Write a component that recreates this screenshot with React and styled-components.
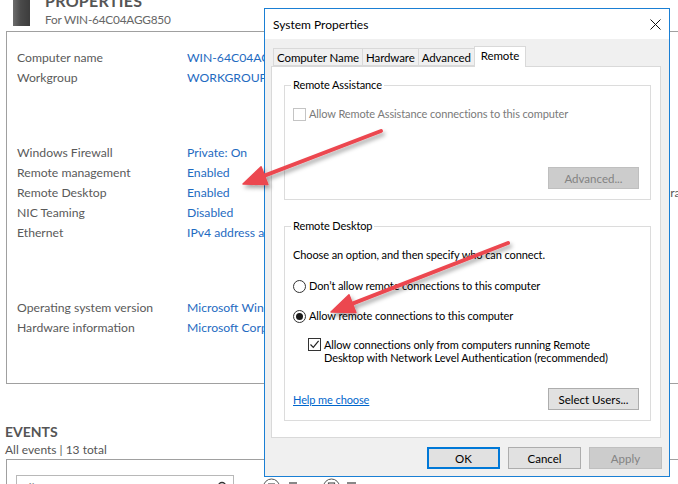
import React from 'react';
import styled, { createGlobalStyle } from 'styled-components';

const GlobalStyle = createGlobalStyle`
  html, body {
    margin: 0;
    padding: 0;
    background: #ffffff;
    overflow: hidden;
  }
  body {
    font-family: Lato, "Liberation Sans", sans-serif;
  }
`;

const groups = [
  [
    ['Computer name', 'WIN-64C04AGG850'],
    ['Workgroup', 'WORKGROUP'],
  ],
  [
    ['Windows Firewall', 'Private: On', 'Windows Defender'],
    ['Remote management', 'Enabled', 'Feedback & Diagnostics'],
    ['Remote Desktop', 'Enabled', 'IE Enhanced Security Configuration'],
    ['NIC Teaming', 'Disabled', 'Time zone'],
    ['Ethernet', 'IPv4 address assigned by DHCP, IPv6 enabled', 'Product ID'],
  ],
  [
    ['Operating system version', 'Microsoft Windows Server 2016 Datacenter'],
    ['Hardware information', 'Microsoft Corporation Virtual Machine'],
  ],
];

const tabs = ['Computer Name', 'Hardware', 'Advanced', 'Remote'];

// arrow: tail -> tip, head drawn at the tip
const arrowPath = (tx, ty, px, py) => {
  const dx = px - tx;
  const dy = py - ty;
  const len = Math.hypot(dx, dy);
  const ux = dx / len;
  const uy = dy / len;
  const bx = px - ux * 23;
  const by = py - uy * 23;
  const nx = -uy * 9.5;
  const ny = ux * 9.5;
  return {
    line: { x1: tx, y1: ty, x2: bx + ux * 2, y2: by + uy * 2 },
    head: `${px},${py} ${bx + nx},${by + ny} ${bx - nx},${by - ny}`,
  };
};

const arrows = [arrowPath(381, 131, 243, 184), arrowPath(508, 243, 331, 312)];

const App = () => {
  return (
    <Page>
      <GlobalStyle />
      <Header>
        <ServerIcon />
        <Titles>
          <Title>PROPERTIES</Title>
          <Subtitle>For WIN-64C04AGG850</Subtitle>
        </Titles>
      </Header>

      <PropsPanel>
        {groups.map((rows, gi) => (
          <PropGroup key={gi}>
            {rows.map(([label, value, extra]) => (
              <PropRow key={label}>
                <PropLabel>{label}</PropLabel>
                <PropValue>{value}</PropValue>
                {extra && <PropLabel>{extra}</PropLabel>}
              </PropRow>
            ))}
          </PropGroup>
        ))}
      </PropsPanel>

      <EventsTitle>EVENTS</EventsTitle>
      <EventsSub>All events | 13 total</EventsSub>
      <EventsPanel>
        <Filter>
          <span>Filter</span>
          <svg width="12" height="12" viewBox="0 0 12 12">
            <circle cx="7" cy="5" r="3.5" fill="none" stroke="#333" strokeWidth="1.4" />
            <line x1="4.5" y1="7.5" x2="1" y2="11" stroke="#333" strokeWidth="1.6" />
          </svg>
        </Filter>
        <ToolIcons>
          <ToolIcon>
            <svg width="38" height="18" viewBox="0 0 38 18">
              <circle cx="8.5" cy="9" r="8" fill="none" stroke="#555" strokeWidth="1" />
              <line x1="5" y1="6" x2="12" y2="6" stroke="#555" strokeWidth="1.2" />
              <line x1="5" y1="9" x2="12" y2="9" stroke="#555" strokeWidth="1.2" />
              <line x1="26" y1="5" x2="34" y2="5" stroke="#555" strokeWidth="1.4" />
            </svg>
          </ToolIcon>
          <ToolIcon>
            <svg width="38" height="18" viewBox="0 0 38 18">
              <circle cx="8.5" cy="9" r="8" fill="none" stroke="#555" strokeWidth="1" />
              <rect x="5.5" y="5" width="6" height="7" fill="none" stroke="#555" strokeWidth="1.2" />
              <line x1="24" y1="5" x2="33" y2="5" stroke="#555" strokeWidth="1.4" />
            </svg>
          </ToolIcon>
        </ToolIcons>
      </EventsPanel>

      <Dialog>
        <TitleBar>
          <span>System Properties</span>
          <svg width="11" height="11" viewBox="0 0 11 11">
            <path d="M0.5 0.5 L10.5 10.5 M10.5 0.5 L0.5 10.5" stroke="#111" strokeWidth="1" />
          </svg>
        </TitleBar>
        <DialogBody>
          <Tabs>
            {tabs.map((t) => (
              <Tab key={t} $active={t === 'Remote'}>
                {t}
              </Tab>
            ))}
          </Tabs>
          <TabPanel>
            <Group>
              <Legend>Remote Assistance</Legend>
              <OptionRow $disabled $top={15}>
                <CheckBox $disabled />
                <span>Allow Remote Assistance connections to this computer</span>
              </OptionRow>
              <ButtonRow $top={46}>
                <Button disabled>Advanced...</Button>
              </ButtonRow>
            </Group>

            <Group $top={19}>
              <Legend>Remote Desktop</Legend>
              <Text $top={14}>Choose an option, and then specify who can connect.</Text>
              <OptionRow $top={16}>
                <Radio />
                <span>Don’t allow remote connections to this computer</span>
              </OptionRow>
              <OptionRow $top={16}>
                <Radio $checked />
                <span>Allow remote connections to this computer</span>
              </OptionRow>
              <OptionRow $top={15} $indent={15} $multi>
                <CheckBox>
                  <svg width="11" height="11" viewBox="0 0 11 11">
                    <path d="M1.5 5.5 L4.3 8.4 L9.6 1.8" fill="none" stroke="#222" strokeWidth="1.2" />
                  </svg>
                </CheckBox>
                <span>
                  Allow connections only from computers running Remote
                  <br />
                  Desktop with Network Level Authentication (recommended)
                </span>
              </OptionRow>
              <ButtonRow $top={24} $between>
                <HelpLink href="#">Help me choose</HelpLink>
                <Button>Select Users...</Button>
              </ButtonRow>
            </Group>
          </TabPanel>
          <Footer>
            <Button $wide $primary>OK</Button>
            <Button $wide>Cancel</Button>
            <Button $wide disabled>Apply</Button>
          </Footer>
        </DialogBody>
      </Dialog>

      <ArrowLayer width="678" height="484" viewBox="0 0 678 484">
        <defs>
          <filter id="shadow" x="-20%" y="-20%" width="140%" height="160%">
            <feDropShadow dx="2" dy="3" stdDeviation="2" floodColor="#000" floodOpacity="0.35" />
          </filter>
        </defs>
        {arrows.map((a, i) => (
          <g key={i} filter="url(#shadow)">
            <line {...a.line} stroke="#ec4750" strokeWidth="4" strokeLinecap="round" />
            <polygon points={a.head} fill="#ec4750" stroke="#ec4750" strokeWidth="1.5" strokeLinejoin="round" />
          </g>
        ))}
      </ArrowLayer>
    </Page>
  );
};

export default App;

const Page = styled.div`
  position: relative;
  width: 678px;
  height: 484px;
  overflow: hidden;
  background: #ffffff;
`;

const Header = styled.header`
  display: flex;
  align-items: flex-start;
  margin-top: -8px;
  padding-left: 13px;
  height: 39px;
`;

const ServerIcon = styled.div`
  width: 17px;
  height: 34px;
  background: linear-gradient(90deg, #6d6d6d 0%, #4a4a4a 45%, #3c3c3c 100%);
`;

const Titles = styled.div`
  margin-left: 15px;
  display: flex;
  flex-direction: column;
`;

const Title = styled.div`
  font-size: 16px;
  font-weight: 700;
  line-height: 18px;
  color: #555555;
  letter-spacing: 0.3px;
`;

const Subtitle = styled.div`
  font-size: 11.8px;
  letter-spacing: -0.2px;
  line-height: 18px;
  color: #666666;
  margin-top: 1px;
`;

const PropsPanel = styled.section`
  box-sizing: border-box;
  margin-left: 6px;
  width: 720px;
  height: 353px;
  border: 1px solid #a0a0a0;
  padding: 15px 0 0 10px;
`;

const PropGroup = styled.div`
  & + & {
    margin-top: 55px;
  }
`;

const PropRow = styled.div`
  display: grid;
  grid-template-columns: 170px 326px auto;
  height: 20px;
  align-items: center;
  font-size: 12.2px;
  white-space: nowrap;
`;

const PropLabel = styled.span`
  color: #5a5a5a;
`;

const PropValue = styled.span`
  color: #1f6bc1;
  overflow: hidden;
`;

const EventsTitle = styled.div`
  margin: 39px 0 0 5px;
  font-size: 14px;
  font-weight: 700;
  line-height: 18px;
  color: #555555;
`;

const EventsSub = styled.div`
  margin-left: 5px;
  font-size: 12px;
  line-height: 17px;
  color: #555555;
`;

const EventsPanel = styled.section`
  box-sizing: border-box;
  margin: 1px 0 0 6px;
  width: 720px;
  height: 60px;
  border: 1px solid #a0a0a0;
  padding: 15px 0 0 9px;
  display: flex;
  align-items: flex-start;
`;

const Filter = styled.div`
  box-sizing: border-box;
  width: 218px;
  height: 24px;
  border: 1px solid #b8b8b8;
  display: flex;
  justify-content: space-between;
  align-items: center;
  padding: 0 6px 0 5px;
  font-size: 12px;
  color: #888888;
`;

const ToolIcons = styled.div`
  display: flex;
  gap: 22px;
  margin: 3px 0 0 29px;
`;

const ToolIcon = styled.div`
  display: flex;
`;

const Dialog = styled.div`
  position: absolute;
  left: 264px;
  top: 8px;
  box-sizing: border-box;
  width: 406px;
  height: 469px;
  border: 1px solid #1a7fd4;
  background: #f0f0f0;
  display: flex;
  flex-direction: column;
  font-family: Lato, "Liberation Sans", sans-serif;
  font-size: 11px;
  letter-spacing: -0.1px;
  color: #000000;
`;

const TitleBar = styled.div`
  height: 30px;
  background: #ffffff;
  display: flex;
  align-items: center;
  justify-content: space-between;
  padding: 0 8px 0 8px;
  font-size: 12px;
  letter-spacing: 0;
`;

const DialogBody = styled.div`
  flex: 1;
  padding: 7px 8px 0 6px;
  display: flex;
  flex-direction: column;
`;

const Tabs = styled.div`
  display: flex;
  align-items: flex-end;
  height: 20px;
  padding-left: 2px;
  position: relative;
  z-index: 1;
`;

const Tab = styled.div`
  box-sizing: border-box;
  height: ${(p) => (p.$active ? '21px' : '18px')};
  margin-bottom: ${(p) => (p.$active ? '-1px' : '0')};
  padding: ${(p) => (p.$active ? '1px 6px 0' : '1px 3px 0')};
  border: 1px solid #d9d9d9;
  border-bottom: ${(p) => (p.$active ? 'none' : '1px solid #d9d9d9')};
  background: ${(p) => (p.$active ? '#ffffff' : '#f0f0f0')};
  font-size: 11.5px;
  line-height: 15px;
  & + & {
    margin-left: -1px;
  }
`;

const TabPanel = styled.div`
  box-sizing: border-box;
  height: 372px;
  background: #ffffff;
  border: 1px solid #d9d9d9;
  padding: 11px 9px 0 12px;
`;

const Group = styled.fieldset`
  margin: ${(p) => p.$top || 0}px 0 0 0;
  padding: 0 11px 10px 8px;
  border: 1px solid #dcdcdc;
  min-width: 0;
`;

const Legend = styled.legend`
  margin-left: -2px;
  padding: 0 2px;
  line-height: 14px;
`;

const Text = styled.div`
  margin-top: ${(p) => p.$top || 0}px;
  line-height: 16px;
`;

const OptionRow = styled.div`
  display: flex;
  align-items: ${(p) => (p.$multi ? 'flex-start' : 'center')};
  gap: 3px;
  margin-top: ${(p) => p.$top || 0}px;
  margin-left: ${(p) => p.$indent || 0}px;
  line-height: ${(p) => (p.$multi ? '13px' : '14px')};
  white-space: nowrap;
  color: ${(p) => (p.$disabled ? '#7a7a7a' : '#000000')};
`;

const CheckBox = styled.span`
  box-sizing: border-box;
  flex: none;
  width: 13px;
  height: 13px;
  border: 1px solid ${(p) => (p.$disabled ? '#c4c4c4' : '#333333')};
  background: #ffffff;
  display: flex;
  align-items: center;
  justify-content: center;
`;

const Radio = styled.span`
  box-sizing: border-box;
  flex: none;
  width: 13px;
  height: 13px;
  border-radius: 50%;
  border: 1px solid #333333;
  background: #ffffff;
  display: flex;
  align-items: center;
  justify-content: center;
  &::after {
    content: '';
    display: ${(p) => (p.$checked ? 'block' : 'none')};
    width: 7px;
    height: 7px;
    border-radius: 50%;
    background: #1a1a1a;
  }
`;

const ButtonRow = styled.div`
  display: flex;
  align-items: center;
  justify-content: ${(p) => (p.$between ? 'space-between' : 'flex-end')};
  margin-top: ${(p) => p.$top || 0}px;
`;

const Button = styled.button`
  box-sizing: border-box;
  width: ${(p) => (p.$wide ? '73px' : '91px')};
  height: 22px;
  padding: 0;
  font-family: inherit;
  font-size: 11.5px;
  color: #000000;
  background: #e1e1e1;
  border: ${(p) => (p.$primary ? '2px solid #0078d7' : '1px solid #adadad')};
  &:disabled {
    color: #838383;
    background: #cccccc;
    border-color: #bfbfbf;
  }
`;

const HelpLink = styled.a`
  color: #0066cc;
  text-decoration: underline;
`;

const Footer = styled.div`
  display: flex;
  justify-content: flex-end;
  gap: 8px;
  margin: 9px -1px 0 0;
`;

const ArrowLayer = styled.svg`
  position: absolute;
  left: 0;
  top: 0;
  pointer-events: none;
`;
